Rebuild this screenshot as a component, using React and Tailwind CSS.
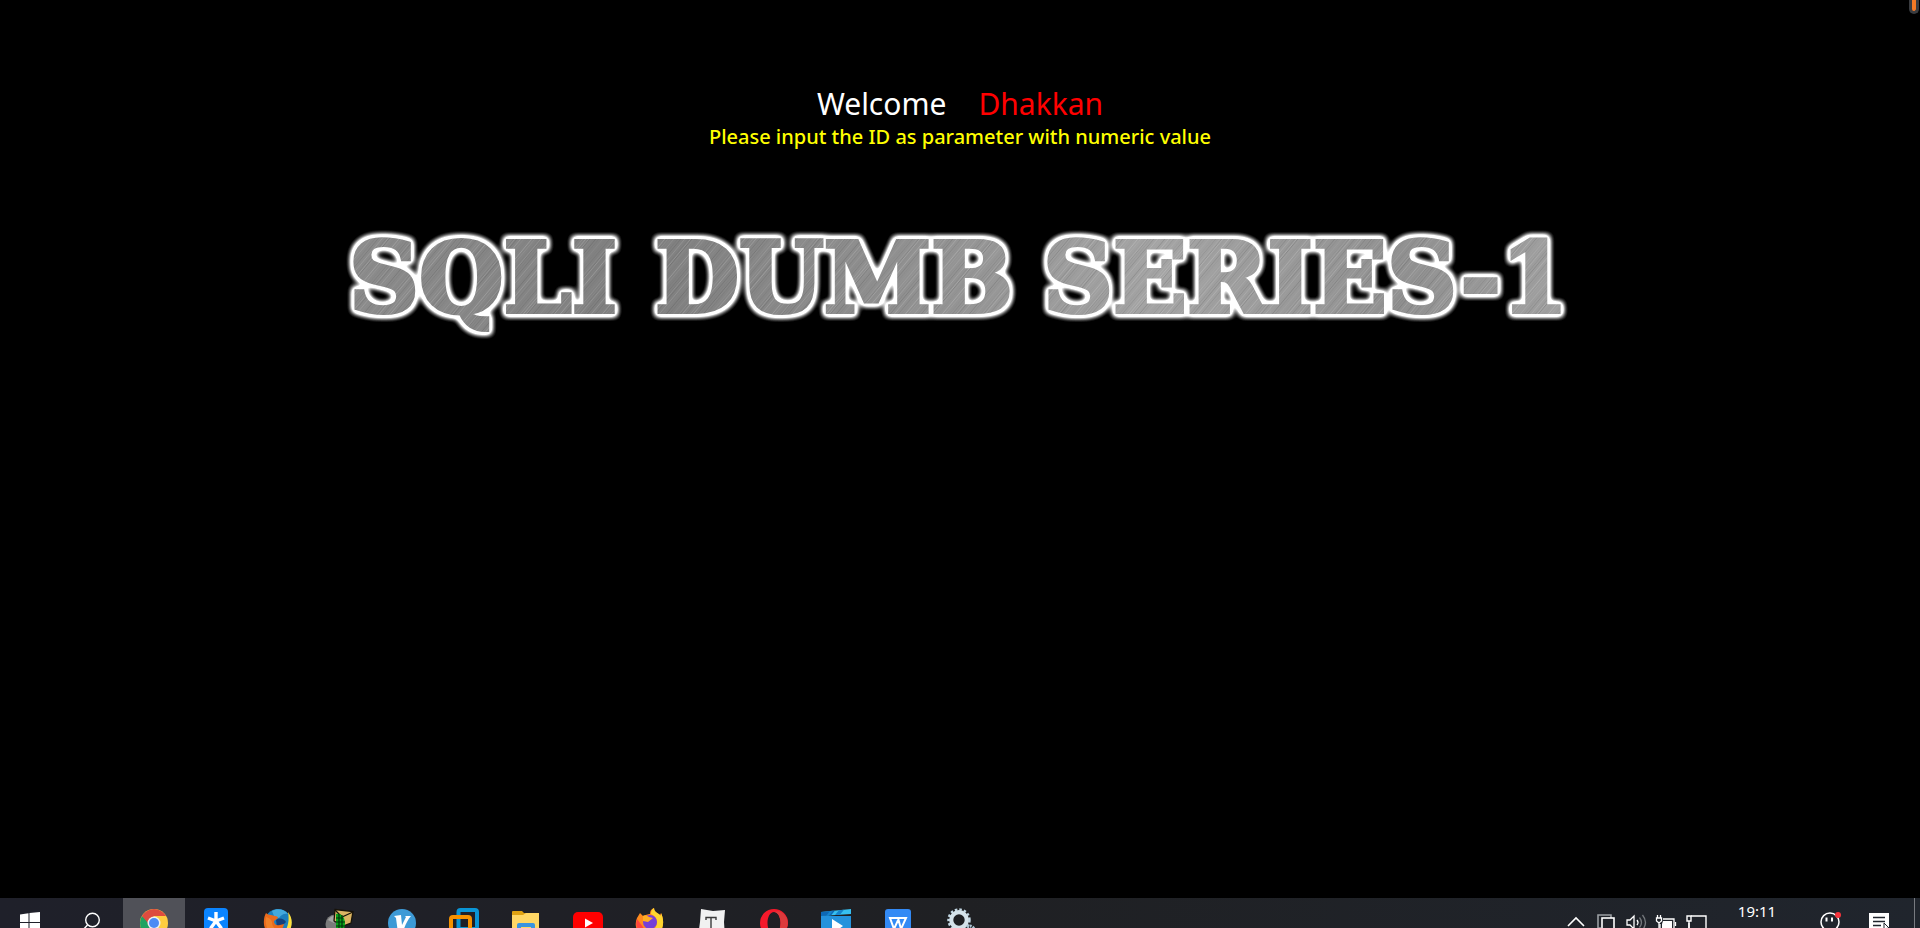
import React from "react";

const hatch = [];
for (let i = 0; i < 450; i++) {
  const r = (i * 7919) % 101;
  hatch.push({
    x: i * 3 - 100 + (r % 5),
    tone: r % 2 ? "#ffffff" : "#303030",
    alpha: 0.03 + (r % 7) * 0.024,
    w: 1,
  });
}

function Banner() {
  return (
    <svg viewBox="0 0 1260 120" className="w-[1260px] max-w-full" role="img" aria-label="SQLI DUMB SERIES-1">
      <defs>
        <linearGradient id="steel" x1="0" y1="0" x2="1" y2="0">
          <stop offset="0" stopColor="#8c8c8c" />
          <stop offset="0.25" stopColor="#7f7f7f" />
          <stop offset="0.5" stopColor="#949494" />
          <stop offset="0.66" stopColor="#a4a4a4" />
          <stop offset="0.85" stopColor="#909090" />
          <stop offset="1" stopColor="#a3a3a3" />
        </linearGradient>
        <pattern id="brushed" patternUnits="userSpaceOnUse" width="1260" height="120">
          <rect width="1260" height="120" fill="url(#steel)" />
          {hatch.map((h, i) => (
            <line key={i} x1={h.x} y1="120" x2={h.x + 100} y2="0" stroke={h.tone} strokeOpacity={h.alpha} strokeWidth={h.w} />
          ))}
        </pattern>
        <filter id="halo" filterUnits="userSpaceOnUse" x="0" y="0" width="1260" height="120" colorInterpolationFilters="sRGB">
          <feMorphology in="SourceAlpha" operator="dilate" radius="2" result="fat" />
          <feGaussianBlur in="fat" stdDeviation="3" result="soft" />
          <feComponentTransfer in="soft" result="rim">
            <feFuncR type="linear" slope="0" intercept="1" />
            <feFuncG type="linear" slope="0" intercept="1" />
            <feFuncB type="linear" slope="0" intercept="1" />
            <feFuncA type="linear" slope="2.6" intercept="-0.1" />
          </feComponentTransfer>
          <feMerge>
            <feMergeNode in="rim" />
            <feMergeNode in="SourceGraphic" />
          </feMerge>
        </filter>
      </defs>
      <g
        filter="url(#halo)"
        fill="url(#brushed)"
        stroke="url(#brushed)"
        strokeWidth="4"
        fontFamily="'DejaVu Serif', serif"
        fontWeight="700"
        fontSize="97"
      >
        <text x="19" y="90">SQLI</text>
        <text x="325" y="90">DUMB</text>
        <text x="713" y="90">SERIES-1</text>
      </g>
    </svg>
  );
}

const apps = [
  {
    name: "Start",
    art: (
      <g fill="#fff">
        <path d="M5 6.5 13.5 5.3V14H5zM14.5 5.1 25 4v10H14.5zM5 15h8.500v9L5 23zM14.500 15H25v11l-10.500-1.500z" />
      </g>
    ),
  },
  {
    name: "Search",
    art: (
      <g fill="none" stroke="#fff" strokeWidth="1.4">
        <circle cx="15.500" cy="12" r="6.800" />
        <path d="M10.500 17 4 24" />
      </g>
    ),
  },
  {
    name: "Chrome",
    active: true,
    art: (
      <g>
        <circle cx="15" cy="15" r="14" fill="#ffcd40" />
        <path d="M15 15 2.900 8A14 14 0 0 0 13 28.800L19 19z" fill="#1ea362" />
        <path d="M2.900 8A14 14 0 0 1 27.100 8H15L9 15z" fill="#de4b3f" />
        <circle cx="15" cy="15" r="6.500" fill="#f1f1f1" />
        <circle cx="15" cy="15" r="5" fill="#4c8bf5" />
      </g>
    ),
  },
  {
    name: "Notes",
    art: (
      <g>
        <rect x="3" y="0" width="24" height="28" rx="4" fill="#0a84ff" />
        <path d="M15 13V4M15 13l8-3M15 13l5.500 7.500M15 13l-5.500 7.500M15 13l-8-3" stroke="#fff" strokeWidth="3.400" />
      </g>
    ),
  },
  {
    name: "Firefox",
    art: (
      <g>
        <circle cx="15" cy="14.500" r="13.500" fill="#1b7fbd" />
        <path d="M9 3C15-.5 22 2 25 6c-4-1-7 1-9 4l-5-2z" fill="#43a9dc" />
        <path d="M13 12c4-3 8-1 10 2l-4 4-5 1z" fill="#14407d" />
        <path d="M25 4c5 6 5 15 0 21l-8 3c7-4 10-14 8-24z" fill="#ffe03a" />
        <path d="M3 5c1 1 3 2 5 2l4 1c2 0 3 1 3 2l-4 3c0 4 3 5 6 4l4-1c-1 6-6 9-10 12C4 26 0 20 1 12c0-3 1-5 2-7z" fill="#ea6a1c" />
        <path d="M3 9c3 1 5 2 6 5 0 4 2 6 5 8l-5 4C4 22 2 17 3 9z" fill="#f0812a" />
      </g>
    ),
  },
  {
    name: "Remote session",
    art: (
      <g>
        <circle cx="10" cy="16" r="9.500" fill="#7b7b7b" />
        <path d="M3 12c2-4 6-5 9-4l-3 7z" fill="#a6a6a6" />
        <path d="m10 1.500 18 2-2 11.500-8 3L9 13z" fill="#dcb563" stroke="#17130a" strokeWidth="1.300" />
        <path d="m10 2 7 7 11-5" fill="none" stroke="#17130a" strokeWidth="1.300" />
        <path d="M11 6c6-1 9 4 9 10s-4 8-9 9z" fill="#08a51a" />
        <path d="M11 10h7M11 14h9M11 18h9M14 6v18M17 7v16" stroke="#02330a" strokeWidth="1.200" />
      </g>
    ),
  },
  {
    name: "V editor",
    art: (
      <g>
        <circle cx="15" cy="15" r="14" fill="#3d9ad6" />
        <path d="m7 8 7-1 1 10 4-8-1-1h6C20 12 18 19 15 25h-4L9 10z" fill="#fff" />
      </g>
    ),
  },
  {
    name: "Virtual machines",
    art: (
      <g fill="none" strokeWidth="4">
        <rect x="9.500" y="2" width="18.500" height="19" rx="2" stroke="#0a95d6" />
        <rect x="2" y="9" width="19" height="17" rx="2" stroke="#f69200" />
      </g>
    ),
  },
  {
    name: "Files",
    art: (
      <g>
        <path d="M1 4q0-1 1-1h9l2 2h15v8H1z" fill="#dfa212" />
        <path d="M1 7h11l3-2h13v21H1z" fill="#ffd765" />
        <path d="M6 17q0-2 2-2h14q2 0 2 2v10H6z" fill="#3a94e0" />
        <path d="M10 19h10v8H10z" fill="#ffd765" />
      </g>
    ),
  },
  {
    name: "YouTube",
    art: (
      <g>
        <rect x="0" y="4" width="30" height="22" rx="5" fill="#f00" />
        <path d="m12 10.500 8 4.500-8 4.500z" fill="#fff" />
      </g>
    ),
  },
  {
    name: "Firefox Browser",
    art: (
      <g>
        <path d="M2 10 5 5l3 3c2-1 5-2 7-2 0-3 1-5 4-6 0 3 2 4 4 6l2 1 1-2c3 6 3 14-1 19-6 5-16 5-21 0C0 20 0 15 2 10z" fill="#ff8a1e" />
        <path d="M16 6c0-3 1-5 3-6 0 3 2 4 5 6l2 2v-3c3 6 3 14-1 19l-5-4c4-6 2-11-4-14z" fill="#ffd52f" />
        <path d="M2 11c-2 6 0 12 4 15l6 2-4-9z" fill="#ff453f" />
        <circle cx="15" cy="14" r="7" fill="#7540d8" />
        <path d="M8 8c2-1 5 0 6 1l4 1-5 4-5-1z" fill="#ffad24" />
      </g>
    ),
  },
  {
    name: "Text editor",
    art: (
      <g>
        <path d="M4 1 16 3l12-1-1 12 1 15H1l2-15z" fill="#f1f1f1" />
        <path d="M9 12V9.500h10V12M14 9.500V23M11 23h6" fill="none" stroke="#3b3b3b" strokeWidth="1.400" />
      </g>
    ),
  },
  {
    name: "Opera",
    art: (
      <g>
        <path fillRule="evenodd" d="M15 1a14 14 0 1 0 0 28 14 14 0 0 0 0-28zM15 4c4 0 6.500 5 6.500 11S19 26 15 26s-6.500-5-6.500-11S11 4 15 4z" fill="#f5192b" />
        <path d="M15 4c2-1 5-1 7 0 9 5 9 17 0 22-2 1-5 1-7 0 4 0 6.500-5 6.500-11S19 4 15 4z" fill="#dc3a3c" />
      </g>
    ),
  },
  {
    name: "Movies",
    art: (
      <g>
        <rect x="0" y="8" width="30" height="20" fill="#2492dc" />
        <path d="M0 4 30 1v5L0 8z" fill="#37c0f0" />
        <path d="M0 4 14 2.600 10 7.400 0 8z" fill="#0d68b5" />
        <path d="m18 2.200 5-.5-4 5-5 .4zM9 3.100l3-.3-4 5-3 .2z" fill="#1583cc" />
        <path d="m11 11 11 7-11 8z" fill="#fff" />
      </g>
    ),
  },
  {
    name: "Writer",
    art: (
      <g>
        <rect x="2" y="1" width="26" height="27" rx="3" fill="#338af5" />
        <path d="M7 10h8l3 11 5-11h-7l-5 11z" fill="none" stroke="#fff" strokeWidth="2" />
      </g>
    ),
  },
  {
    name: "Services",
    art: (
      <g>
        <circle cx="14" cy="12" r="10.500" fill="none" stroke="#c3d8e4" strokeWidth="2.500" strokeDasharray="2.500 2" />
        <circle cx="14" cy="12" r="7.800" fill="none" stroke="#d5e3ea" strokeWidth="4.200" />
        <circle cx="25" cy="22" r="4" fill="none" stroke="#a9c3d2" strokeWidth="3" strokeDasharray="2 1" />
      </g>
    ),
  },
];

const tray = [
  { name: "Show hidden icons", art: <path d="m3 18 8-8 8 8" strokeWidth="1.600" /> },
  {
    name: "Displays",
    art: (
      <g strokeWidth="1.600">
        <path d="M6 20H3V7h13v3" stroke="#9a9ea2" />
        <rect x="7" y="10" width="12" height="12" />
      </g>
    ),
  },
  {
    name: "Volume",
    art: (
      <g strokeWidth="1.300">
        <path d="M2 12h3l4-4v13l-4-4H2z" />
        <path d="M12 12q2 2.500 0 5" />
        <path d="M14.500 9.500q4 5 0 10M17.500 7q6 7.500 0 15" stroke="#74787c" />
      </g>
    ),
  },
  {
    name: "Battery",
    art: (
      <g strokeWidth="1.300">
        <path d="M8 11h11v10H5v-5" />
        <path d="M8 13h9v8H7v-5z" fill="#fff" stroke="none" />
        <path d="M20.500 14v4M2.500 7v3M5.500 7v3M1.500 10h5v3L4 15l-2.500-2zM4 15v5" />
      </g>
    ),
  },
  {
    name: "Network",
    art: (
      <g strokeWidth="1.400">
        <path d="M6 8h15v13H4v-6" />
        <path d="M2 8h4v5H2zM4 13v8" />
      </g>
    ),
  },
];

function Taskbar() {
  return (
    <footer className="flex h-[30px] shrink-0 items-start overflow-hidden bg-linear-to-r from-[#1f202a] via-[#1f2023] to-[#20252d]">
      <nav aria-label="Applications" className="-ml-px flex">
        {apps.map((a) => (
          <button
            key={a.name}
            type="button"
            aria-label={a.name}
            className={a.active ? "flex h-[50px] w-[62px] items-center justify-center bg-[#505158]" : "flex h-[50px] w-[62px] items-center justify-center"}
          >
            <svg viewBox="0 0 30 30" className="size-[30px]">{a.art}</svg>
          </button>
        ))}
      </nav>
      <div className="ml-auto flex items-start">
        <div className="mr-6 flex gap-2">
          {tray.map((t) => (
            <button key={t.name} type="button" aria-label={t.name} className="flex h-[50px] items-start pt-[10px]">
              <svg viewBox="0 0 22 22" className="size-[22px] overflow-visible" fill="none" stroke="#fff">{t.art}</svg>
            </button>
          ))}
        </div>
        <time className="w-[52px] pt-[3px] text-center font-['Noto_Sans',sans-serif] text-[15px] leading-5 text-white">19:11</time>
        <button type="button" aria-label="Assistant" className="ml-9 flex h-[50px] items-start pt-[10px]">
          <svg viewBox="0 0 24 24" className="size-6 overflow-visible">
            <circle cx="11" cy="14" r="9" fill="none" stroke="#fff" strokeWidth="1.500" />
            <path d="M7.500 9.500v4M13 9.500v4" stroke="#fff" strokeWidth="2" />
            <circle cx="19" cy="7" r="3" fill="#f5343c" />
          </svg>
        </button>
        <button type="button" aria-label="Notifications" className="ml-6 flex h-[50px] items-start pt-[10px]">
          <svg viewBox="0 0 24 24" className="size-6">
            <path d="M2 5h20v17H2z" fill="#fff" />
            <path d="M6 9.500h12M6 13.500h12M6 17.500h8" stroke="#20252d" strokeWidth="1.400" />
            <path d="m17 15 5 5-3 .5-2 2z" fill="#fff" stroke="#20252d" />
          </svg>
        </button>
        <div className="ml-[23px] mr-[5px] h-[30px] w-px bg-[#777a80]" />
      </div>
    </footer>
  );
}

export default function App() {
  return (
    <div className="relative flex min-h-screen flex-col bg-black">
      <div className="absolute right-px top-0 h-[14px] w-[10px] rounded-b-md border-x-3 border-b-3 border-[#3a3c40] bg-[#f47a26]" />
      <main className="flex flex-1 flex-col items-center gap-px pt-[84px] font-['Noto_Sans',sans-serif]">
        <h1 className="flex gap-8 text-[30px] leading-10 text-white">
          <span>Welcome</span>
          <span className="text-[#ff0000]">Dhakkan</span>
        </h1>
        <p className="text-center text-[20px] font-medium leading-6 text-[#ffff00]">Please input the ID as parameter with numeric value</p>
        <div className="mt-[72px] flex w-full justify-center">
          <Banner />
        </div>
      </main>
      <Taskbar />
    </div>
  );
}
